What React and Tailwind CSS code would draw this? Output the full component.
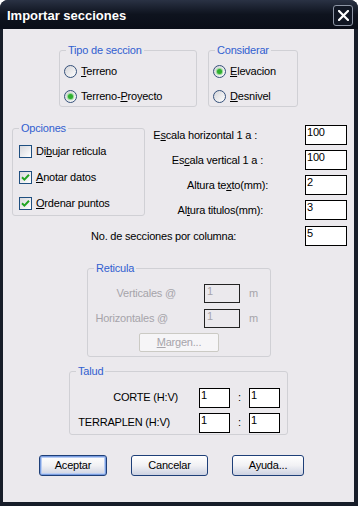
import React from 'react';

function U({ children }) {
  return <span className="underline underline-offset-[1px]">{children}</span>;
}

function Group({ label, className, children }) {
  return (
    <div className={`relative border border-[#d0d0d5] rounded-[3px] ${className}`}>
      <span className="absolute -top-[7px] left-[6px] px-[2px] bg-[#ebe9ed] text-[#3160d0]">{label}</span>
      {children}
    </div>
  );
}

function Radio({ checked, children }) {
  return (
    <div className="flex items-center h-[13px]">
      <div className="w-[13px] h-[13px] shrink-0 rounded-full border border-[#34507a] bg-gradient-to-br from-[#d4d4d8] to-white flex items-center justify-center">
        {checked && <div className="w-[5px] h-[5px] rounded-full bg-[#2fae2f] shadow-[0_0_1px_1px_#8fd88f]" />}
      </div>
      <span className="ml-[4px]">{children}</span>
    </div>
  );
}

function Check({ checked, children }) {
  return (
    <div className="flex items-center h-[13px]">
      <div className="w-[13px] h-[13px] shrink-0 border border-[#1f4f80] bg-gradient-to-br from-[#d8d8dc] to-white flex items-center justify-center">
        {checked && (
          <svg width="9" height="9" viewBox="0 0 9 9">
            <path d="M1 4.2 L3.4 6.6 L8 1.8" stroke="#21a421" strokeWidth="2" fill="none" />
          </svg>
        )}
      </div>
      <span className="ml-[4px]">{children}</span>
    </div>
  );
}

function Field({ value, className = '' }) {
  return (
    <div className={`h-[20px] border border-black bg-white pl-[1px] ${className}`}>{value}</div>
  );
}

function Off({ value, className = '' }) {
  return (
    <div className={`h-[19px] border border-[#222] pl-[2px] text-[#a6a4aa] ${className}`}>{value}</div>
  );
}

function Button({ children, main, className = '' }) {
  return (
    <div
      className={`h-[21px] rounded-[3px] border border-[#1e3f78] bg-gradient-to-b from-white via-[#f1f1f4] to-[#cdd2e2] flex items-center justify-center ${
        main ? 'shadow-[inset_0_0_0_1px_#7a9de0,inset_0_0_0_2px_#b9cdf3]' : ''
      } ${className}`}
    >
      {children}
    </div>
  );
}

export default function App() {
  return (
    <div className="w-[358px] h-[506px] bg-white font-['Liberation_Sans',Arial,sans-serif] text-[11px] leading-[13px] text-black">
      <div className="w-full h-full rounded-t-[8px] bg-[#171d29] flex flex-col overflow-hidden">
        <div className="h-[29px] shrink-0 flex items-center bg-gradient-to-b from-[#2a3244] via-[#0e131e] to-[#0a0e18]">
          <span className="ml-[7px] mt-[3px] text-white text-[13px] leading-[16px] font-bold">Importar secciones</span>
          <div className="ml-auto mr-[5px] mt-[1px] w-[20px] h-[21px] rounded-[3px] border border-[#8d95a5] bg-[#111724] flex items-center justify-center">
            <svg width="11" height="11" viewBox="0 0 11 11">
              <path d="M1 1 L10 10 M10 1 L1 10" stroke="white" strokeWidth="2.2" strokeLinecap="square" />
            </svg>
          </div>
        </div>

        <div className="ml-[3px] mr-[4px] mb-[4px] flex-1 bg-[#ebe9ed] flex flex-col tracking-[-0.2px]">
          {/* tipo / considerar */}
          <div className="flex mt-[21px] ml-[56px]">
            <Group label="Tipo de seccion" className="w-[138px] h-[57px]">
              <div className="flex flex-col gap-[12px] pt-[14px] pl-[4px]">
                <Radio><U>T</U>erreno</Radio>
                <Radio checked>Terreno-<U>P</U>royecto</Radio>
              </div>
            </Group>
            <Group label="Considerar" className="ml-[11px] w-[90px] h-[57px]">
              <div className="flex flex-col gap-[12px] pt-[14px] pl-[4px]">
                <Radio checked><U>E</U>levacion</Radio>
                <Radio><U>D</U>esnivel</Radio>
              </div>
            </Group>
          </div>

          {/* opciones + escalas */}
          <div className="flex mt-[18px]">
            <Group label="Opciones" className="ml-[9px] mt-[3px] w-[133px] h-[88px] shrink-0">
              <div className="flex flex-col gap-[13px] pt-[16px] pl-[6px]">
                <Check>Di<U>b</U>ujar reticula</Check>
                <Check checked><U>A</U>notar datos</Check>
                <Check checked><U>O</U>rdenar puntos</Check>
              </div>
            </Group>
            <div className="flex-1 flex flex-col gap-[5px] pr-[7px]">
              <div className="flex items-center justify-end h-[20px]">
                <span className="mr-[48px]">E<U>s</U>cala horizontal 1 a :</span>
                <Field value="100" className="w-[42px]" />
              </div>
              <div className="flex items-center justify-end h-[20px]">
                <span className="mr-[42px]">Es<U>c</U>ala vertical 1 a :</span>
                <Field value="100" className="w-[42px]" />
              </div>
              <div className="flex items-center justify-end h-[20px]">
                <span className="mr-[37px]">Altura te<U>x</U>to(mm):</span>
                <Field value="2" className="w-[42px]" />
              </div>
              <div className="flex items-center justify-end h-[20px]">
                <span className="mr-[42px]">Al<U>t</U>ura titulos(mm):</span>
                <Field value="3" className="w-[42px]" />
              </div>
            </div>
          </div>

          <div className="flex items-center mt-[6px] h-[20px] pr-[7px]">
            <span className="ml-[88px]">No. de secciones por columna:</span>
            <Field value="5" className="ml-auto w-[42px]" />
          </div>

          {/* reticula */}
          <Group label="Reticula" className="ml-[84px] mt-[22px] w-[184px] h-[89px]">
            <div className="flex flex-col pt-[15px] text-[#a6a4aa]">
              <div className="flex items-center h-[19px]">
                <span className="w-[116px] text-right pr-[28px]">Verticales @</span>
                <Off value="1" className="w-[36px]" />
                <span className="ml-[9px]">m</span>
              </div>
              <div className="flex items-center h-[19px] mt-[6px]">
                <span className="w-[116px] text-right pr-[36px]">Horizontales @</span>
                <Off value="1" className="w-[36px]" />
                <span className="ml-[9px]">m</span>
              </div>
              <div className="ml-[51px] mt-[5px] w-[80px] h-[19px] rounded-[2px] border border-[#cbcac4] bg-[#f6f5f7] flex items-center justify-center">
                <span><U>M</U>argen...</span>
              </div>
            </div>
          </Group>

          {/* talud */}
          <Group label="Talud" className="ml-[66px] mt-[14px] w-[219px] h-[64px]">
            <div className="flex flex-col gap-[6px] pt-[16px]">
              <div className="flex items-center h-[19px]">
                <span className="w-[129px] text-right pr-[21px]">CORTE (H:V)</span>
                <Field value="1" className="w-[31px] h-[19px]" />
                <span className="w-[19px] text-center">:</span>
                <Field value="1" className="w-[31px] h-[19px]" />
              </div>
              <div className="flex items-center h-[19px]">
                <span className="w-[129px] text-right pr-[29px]">TERRAPLEN (H:V)</span>
                <Field value="1" className="w-[31px] h-[19px]" />
                <span className="w-[19px] text-center">:</span>
                <Field value="1" className="w-[31px] h-[19px]" />
              </div>
            </div>
          </Group>

          {/* buttons */}
          <div className="flex mt-[20px] ml-[36px]">
            <Button main className="w-[68px]">Aceptar</Button>
            <Button className="ml-[24px] w-[77px]">Cancelar</Button>
            <Button className="ml-[24px] w-[72px]">Ayuda...</Button>
          </div>
        </div>
      </div>
    </div>
  );
}
